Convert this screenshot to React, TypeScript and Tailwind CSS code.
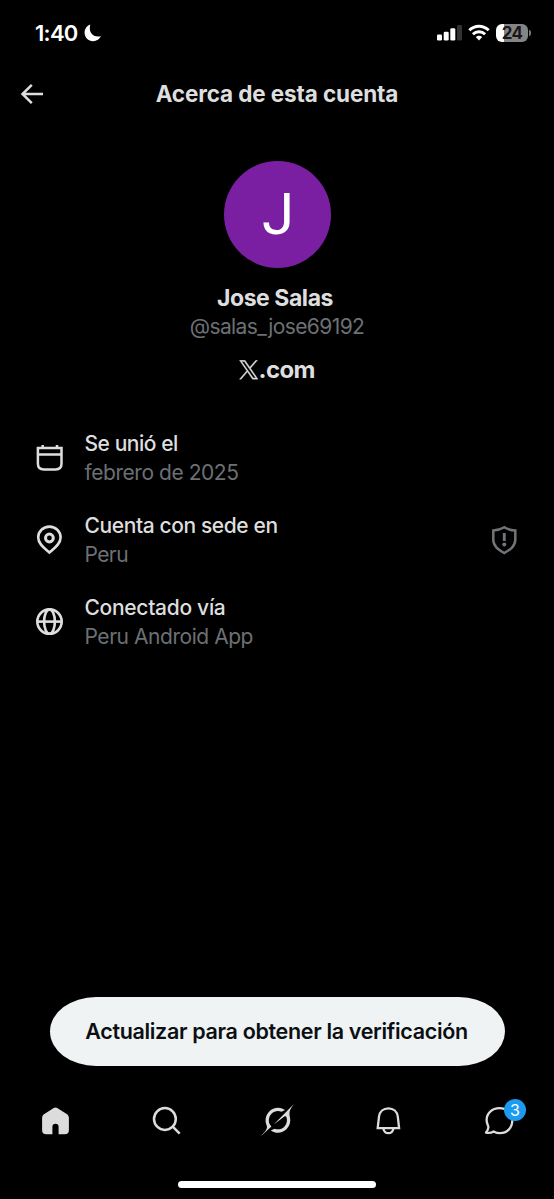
import React, { ReactNode } from 'react';

interface InfoRowProps {
  icon: ReactNode;
  title: ReactNode;
  value: ReactNode;
  trailing?: ReactNode;
}

function InfoRow({ icon, title, value, trailing }: InfoRowProps) {
  return (
    <div className="flex h-[82px] items-center pl-[35px] pr-[35px]">
      <div className="w-[49.5px] shrink-0">{icon}</div>
      <div className="flex flex-1 flex-col items-start whitespace-nowrap text-[21px] leading-[29px]">
        {title}
        {value}
      </div>
      {trailing}
    </div>
  );
}

function StatusBar() {
  return (
    <div className="flex h-[66px] items-center justify-between pl-[35px] pr-[23px]">
      <div className="flex items-center gap-[6px]">
        <span className="text-[22px] font-semibold leading-[26px] tracking-[-0.7px] text-white">1:40</span>
        <svg width="18" height="18" viewBox="0 0 18 18" fill="#fff">
          <path d="M6.300.5C3 1.700.6 4.900.6 8.700c0 4.800 3.700 8.500 8.400 8.500 3.700 0 6.700-2.100 7.900-5.200-.9.400-1.900.5-2.900.5C9.400 12.500 5.800 9.200 5.800 4.500c0-1.400.2-2.700.5-4z" />
        </svg>
      </div>
      <div className="flex items-center">
        <svg width="26" height="18" viewBox="0 0 26 18" fill="#fff">
          <rect x="0" y="10.500" width="5" height="6" rx="1.300" />
          <rect x="6.700" y="7.700" width="5" height="8.800" rx="1.300" />
          <rect x="13.300" y="4.300" width="5" height="12.200" rx="1.300" />
          <rect x="20" y="1" width="5" height="15.500" rx="1.300" fill="#333" />
        </svg>
        <svg className="ml-[5px]" width="22" height="18" viewBox="0 0 22 18" fill="none" stroke="#fff" strokeWidth="2.900">
          <path d="M1.300 6.300C6.800.8 15.200.8 20.700 6.300" />
          <path d="M4.900 10.200c3.400-3.300 8.800-3.300 12.200 0" />
          <path d="M7.800 12.900c1.800-1.700 4.600-1.700 6.400 0L11 16.400z" fill="#fff" stroke="none" />
        </svg>
        <div className="ml-[6px] flex h-[18.5px] w-[32px] items-center justify-center rounded-[6px] bg-[linear-gradient(to_right,#fff_8px,#858585_8px)]">
          <span className="text-[17px] font-bold leading-none tracking-[-0.6px] text-[#181818]">24</span>
        </div>
        <div className="ml-px h-[6px] w-[2px] rounded-r-full bg-[#777]" />
      </div>
    </div>
  );
}

function CalendarIcon() {
  return (
    <svg width="30" height="30" viewBox="0 0 30 30" fill="none" stroke="#dededf" strokeWidth="2.500">
      <path d="M2.900 5h23.600v15.600c0 3.700-2.200 5.900-5.900 5.900H8.800c-3.700 0-5.900-2.200-5.900-5.900z" />
      <path d="M2.900 11.400h23.600M7.700 2v3M22 2v3" />
    </svg>
  );
}

function PinIcon() {
  return (
    <svg width="30" height="30" viewBox="0 0 30 30" fill="none" stroke="#dededf" strokeWidth="2.600">
      <path d="M14.400 27.600C10 23.700 3.200 19.200 3.200 12.500a11.200 10.900 0 0 1 22.400 0c0 6.700-6.800 11.200-11.200 15.100z" />
      <circle cx="14.400" cy="13" r="3.900" strokeWidth="3" />
    </svg>
  );
}

function GlobeIcon() {
  return (
    <svg width="30" height="30" viewBox="0 0 30 30" fill="none" stroke="#dededf" strokeWidth="2.600">
      <circle cx="14.500" cy="14.600" r="12.200" />
      <ellipse cx="14.500" cy="14.600" rx="5.400" ry="12.200" />
      <path d="M2.200 14.600h24.600" />
    </svg>
  );
}

function ShieldIcon() {
  return (
    <svg width="30" height="30" viewBox="0 0 30 30" fill="none" stroke="#717578" strokeWidth="2.500">
      <path d="M15.300 2.300c3.400 2.100 7 3 11 3.100v9.400c0 6.700-5.100 9.700-11 13.200-5.900-3.500-11-6.500-11-13.200V5.400c4-.1 7.600-1 11-3.100z" />
      <path d="M15.300 8v8" strokeWidth="2.900" />
      <circle cx="15.300" cy="19.500" r="2" fill="#717578" stroke="none" />
    </svg>
  );
}

function TabBar() {
  return (
    <nav className="grid h-[61px] grid-cols-5 place-items-center pl-px">
      <svg width="32" height="32" viewBox="0 0 32 32" fill="#dcdcdc">
        <path d="M13.800 3 4.300 9.100C2.800 10.100 2.100 11.300 2.100 13.100V24.900c0 3 1.300 4.300 4.300 4.300h6v-7.300a3.100 3.100 0 0 1 6.200 0v7.300h6c3 0 4.300-1.300 4.300-4.300V13.100c0-1.800-.7-3-2.200-4L17.200 3c-1.300-.8-2.100-.8-3.400 0z" />
      </svg>
      <svg width="32" height="32" viewBox="0 0 32 32" fill="none" stroke="#dcdcdc" strokeWidth="2.500">
        <circle cx="13.900" cy="14" r="10.900" />
        <path d="m21.700 21.600 7 7" />
      </svg>
      <svg className="-mt-px" width="33" height="32" viewBox="0 0 33 32" fill="#dcdcdc">
        <path d="M12.745 20.54l10.97-8.190c.539-.4 1.307-.244 1.564.38 1.349 3.288.746 7.241-1.938 9.955-2.683 2.714-6.417 3.310-9.830 1.954l-3.728 1.745c5.347 3.697 11.840 2.782 15.898-1.324 3.219-3.255 4.216-7.692 3.284-11.693l.008.009c-1.351-5.878.332-8.227 3.782-13.031L33 0l-4.540 4.590v-.014L12.743 20.544m-2.263 1.987c-3.837-3.707-3.175-9.446.1-12.755 2.420-2.449 6.388-3.448 9.852-1.979l3.720-1.737c-.67-.49-1.530-1.017-2.515-1.387-4.455-1.854-9.789-.931-13.410 2.728-3.483 3.523-4.579 8.940-2.697 13.561 1.405 3.454-.899 5.898-3.220 8.364C1.490 30.200.666 31.074 0 32l10.478-9.466" />
      </svg>
      <svg width="32" height="32" viewBox="0 0 32 32" fill="none" stroke="#dcdcdc" strokeWidth="2.300">
        <path d="M5.700 23.100 7 11.700C7.600 6.700 11.400 3.400 16.400 3.400s8.800 3.300 9.400 8.300l1.300 11.400z" />
        <path d="M11.300 23.400c.7 3 2.500 4.800 5.100 4.800s4.400-1.800 5.100-4.800" />
      </svg>
      <div className="relative">
        <svg width="32" height="32" viewBox="0 0 32 32" fill="none" stroke="#dcdcdc" strokeWidth="2.300" strokeLinejoin="round">
          <path d="M16.400 3.200C9.100 3.200 3.600 8.400 3.600 14.900c0 2.600.9 4.600 1.600 6.300.6 1.500.1 3.200-2.200 6.400 3 .6 5.200.4 7.600-1.100 2 1.100 4.100 1.700 6.300 1.700 7 0 12.400-5.200 12.400-12.600C29.300 8.200 23.900 3.200 16.400 3.200z" />
        </svg>
        <span className="absolute left-[21.500px] top-[-5.500px] flex h-[21.500px] w-[21.500px] items-center justify-center rounded-full bg-[#1d9bf0] text-[16px] leading-none text-white">
          3
        </span>
      </div>
    </nav>
  );
}

export default function App() {
  return (
    <div className="flex h-[1199px] w-[554px] flex-col overflow-hidden bg-black font-['Inter',sans-serif] text-[#dededf]">
      <StatusBar />

      <header className="grid h-[56px] grid-cols-[65px_1fr_65px] items-center">
        <svg className="ml-[20px]" width="24" height="22" viewBox="0 0 24 22" fill="none" stroke="#dededf" strokeWidth="2.500">
          <path d="M23 11H2.500M11.800 1.800 2.500 11l9.300 9.200" />
        </svg>
        <h1 className="whitespace-nowrap text-center text-[22.500px] font-bold tracking-[-0.120px]">Acerca de esta cuenta</h1>
      </header>

      <section className="mt-[38.5px] flex flex-col items-center whitespace-nowrap">
        <div className="flex h-[107px] w-[107px] items-center justify-center rounded-full bg-[#7b1fa2] pl-[2px] font-['Roboto',sans-serif] text-[58px] leading-none text-white">
          J
        </div>
        <h2 className="mt-[15.500px] pr-[4px] text-[23px] font-bold leading-[30px] tracking-[-0.450px]">Jose Salas</h2>
        <p className="text-[21px] leading-[27px] tracking-[-0.600px] text-[#6c7074]">@salas_jose69192</p>
        <div className="mt-[15px] flex h-[30px] items-center">
          <svg width="19.500" height="19.500" viewBox="0 0 24 24" fill="#dededf" stroke="#dededf" strokeWidth=".5">
            <path d="M14.200 10.200 22.700.4h-2L13.300 8.900 7.400.4H.6l8.900 12.900-8.900 10.300h2l7.800-9 6.200 9h6.800zM3.300 1.900h3.200l14.200 20.200h-3.200z" />
          </svg>
          <span className="text-[24px] font-bold leading-[30px] tracking-[-0.600px]">.com</span>
        </div>
      </section>

      <section className="mt-[32px] flex flex-col">
        <InfoRow
          icon={<CalendarIcon />}
          title={<span className="font-medium tracking-[-0.450px]">Se unió el</span>}
          value={<span className="tracking-[-0.450px] text-[#6c7074]">febrero de 2025</span>}
        />
        <InfoRow
          icon={<PinIcon />}
          title={<span className="font-medium tracking-[-0.400px]">Cuenta con sede en</span>}
          value={<span className="tracking-[-0.600px] text-[#6c7074]">Peru</span>}
          trailing={<ShieldIcon />}
        />
        <InfoRow
          icon={<GlobeIcon />}
          title={<span className="font-medium tracking-[-0.300px]">Conectado vía</span>}
          value={<span className="tracking-[-0.450px] text-[#6c7074]">Peru Android App</span>}
        />
      </section>

      <div className="mt-auto px-[49.500px]">
        <button className="h-[69px] w-full whitespace-nowrap rounded-[46px/34.5px] bg-[#eff3f4] pr-px text-[21.500px] font-semibold tracking-[-0.330px] text-[#0c0f12]">
          Actualizar para obtener la verificación
        </button>
      </div>

      <div className="mt-[24px]">
        <TabBar />
      </div>
      <div className="flex h-[48px] items-end justify-center pb-[11px]">
        <div className="h-[7px] w-[198px] rounded-full bg-white" />
      </div>
    </div>
  );
}
